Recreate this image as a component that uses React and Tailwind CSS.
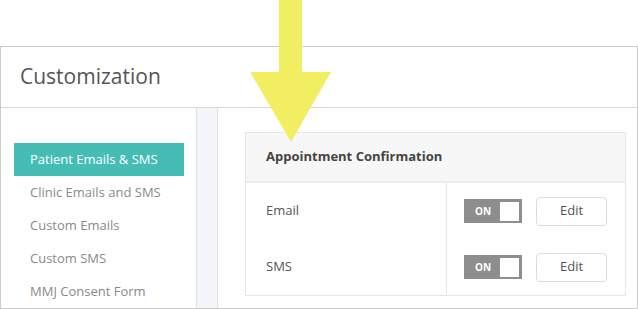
import React from "react";

function Toggle() {
  return (
    <div className="flex h-[24px] w-[58px] items-center justify-between bg-[#8e8e8e] pl-[11px] pr-[3px]">
      <span className="text-[10px] font-bold leading-none text-white">ON</span>
      <span className="h-[19px] w-[19px] bg-white" />
    </div>
  );
}

function Row({ label }) {
  return (
    <div className="flex h-[56px]">
      <div className="flex w-[201px] items-center border-r border-[#e6e6e6] pl-[20px] text-[13px] text-[#555]">
        {label}
      </div>
      <div className="flex flex-1 items-center gap-[14px] pl-[17px]">
        <Toggle />
        <button className="h-[29px] w-[71px] rounded-[4px] border border-[#dcdcdc] bg-white text-[13px] text-[#555]">
          Edit
        </button>
      </div>
    </div>
  );
}

export default function App() {
  const items = [
    "Clinic Emails and SMS",
    "Custom Emails",
    "Custom SMS",
    "MMJ Consent Form",
  ];
  return (
    <div
      className="relative h-[309px] w-[638px] overflow-hidden bg-white pt-[46px]"
      style={{ fontFamily: '"Open Sans", sans-serif' }}
    >
      <div className="h-[263px] border border-b-0 border-[#cccccc]">
        <div className="flex h-[61px] items-center border-b border-[#d6d6d6] pl-[19px] text-[21px] text-[#555]">
          Customization
        </div>
        <div className="flex h-[201px] border-b border-[#cccccc]">
          <div className="w-[196px] border-r border-[#e0e0e0] pl-[13px] pt-[35px]">
            <div className="flex h-[33px] w-[170px] items-center bg-[#45bdb4] pl-[16px] text-[13px] text-white">
              Patient Emails &amp; SMS
            </div>
            {items.map((t) => (
              <div key={t} className="flex h-[33px] items-center pl-[16px] text-[13px] text-[#8a8a8a]">
                {t}
              </div>
            ))}
          </div>
          <div className="w-[21px] border-r border-[#e0e0e0] bg-[#f4f5f8]" />
          <div className="flex-1 pl-[27px] pr-[11px] pt-[24px]">
            <div className="border border-[#e6e6e6]">
              <div className="flex h-[50px] items-center border-b-2 border-[#ececec] bg-[#f7f7f7] pl-[20px] text-[13px] font-bold text-[#444]">
                Appointment Confirmation
              </div>
              <Row label="Email" />
              <Row label="SMS" />
            </div>
          </div>
        </div>
      </div>
      <svg className="absolute left-0 top-0" width="638" height="160" viewBox="0 0 638 160">
        <polygon
          points="279,0 302,0 302,72 331,72 291,142 250,72 279,72"
          fill="#f2ee62"
        />
      </svg>
    </div>
  );
}
